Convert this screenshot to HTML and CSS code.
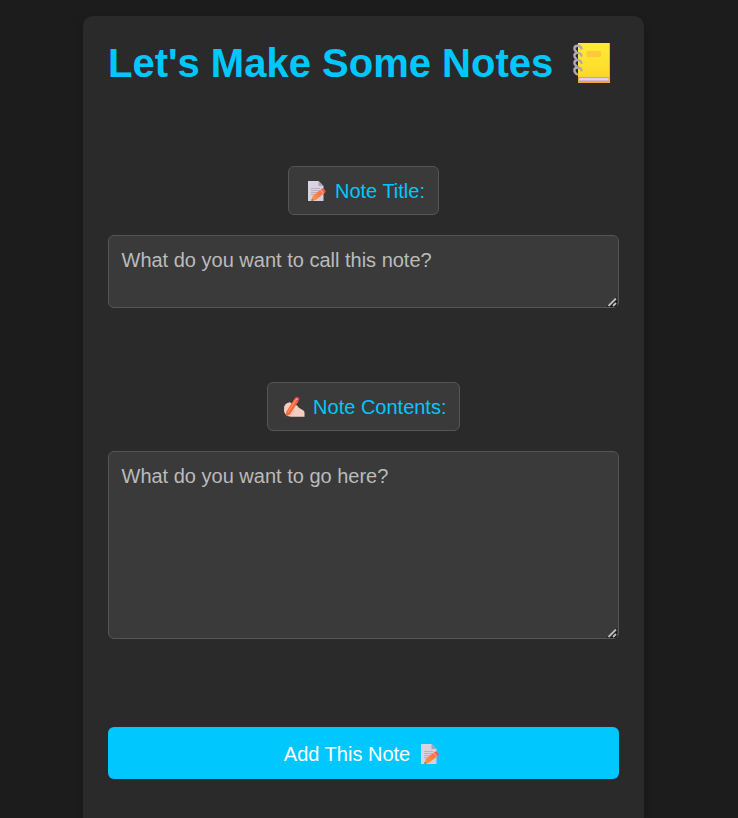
FILE: index.html
```html
<!DOCTYPE html>
<html lang="en">
<head>
<meta charset="utf-8">
<title>Notes</title>
<link rel="stylesheet" href="styles.css">
</head>
<body>
<svg class="defs" width="0" height="0" aria-hidden="true">
  <defs>
    <linearGradient id="paper" x1="0" y1="0" x2="1" y2="1"><stop offset="0" stop-color="#dcd5de"/><stop offset="1" stop-color="#d5cbe2"/></linearGradient>
    <linearGradient id="pencil" x1="1" y1="0" x2="0" y2="1"><stop offset="0" stop-color="#ff6546"/><stop offset="1" stop-color="#ff9b3c"/></linearGradient>
    <linearGradient id="cover" x1="0" y1="0" x2="0" y2="1"><stop offset="0" stop-color="#ffeb35"/><stop offset="1" stop-color="#fdd526"/></linearGradient>
    <linearGradient id="skin" x1="0" y1="0" x2="1" y2="1"><stop offset="0" stop-color="#f5cbb9"/><stop offset="1" stop-color="#f2d0c4"/></linearGradient>
    <symbol id="memo" viewBox="0 0 20 20">
      <path d="M1 0h10.500l5 5v15H1z" fill="url(#paper)"/>
      <path d="M11.500 0v5h5z" fill="#aba2b2"/>
      <path d="M4 7.500h9M4 9.500h8M4 11.500h6M4 13.500h4" stroke="#b0a8b8" stroke-width=".8"/>
      <path d="M4.500 19.700l1.200-4.700 7.700-6.200 3.200 4-7.900 6.200z" fill="url(#pencil)"/>
      <path d="M4.200 19.800l.7-2 1.600 1.700z" fill="#74596d"/>
      <path d="M13 9.100l1-.8 3.200 4-1 .8z" fill="#f0a09a"/>
      <path d="M14 8.300l1-.8q1.200-.5 2.800 1.300 1.500 1.700.4 2.700l-1 .8z" fill="#fb5848"/>
    </symbol>
    <symbol id="grip" viewBox="0 0 11 11">
      <path d="M0 9.500L9 0l1 1v8l-2 1H0z" fill="#161616"/>
      <path d="M1.500 9L9 1.500" stroke="#bebebe" stroke-width="2"/>
      <path d="M6 9l3-3" stroke="#bebebe" stroke-width="2"/>
    </symbol>
  </defs>
</svg>
<main class="card">
  <h1 class="title">Let's Make Some Notes
    <svg class="notebook" viewBox="0 0 40 40" aria-hidden="true">
      <path d="M6 0h32v40H6z" fill="url(#cover)"/>
      <path d="M6 34h32v6H6z" fill="#eea733"/>
      <path d="M7 35h29.500v2H7z" fill="#e6cdf0"/><path d="M7 37h29.500v1H7z" fill="#d9afd8"/>
      <path d="M37 0h1v40h-1z" fill="#dfbd2b"/>
      <rect x="14.500" y="8" width="14.500" height="6" rx="1" fill="#ffc83b"/>
      <g fill="none" stroke="#b4a6b9" stroke-width="2.400" stroke-linecap="round">
        <path d="M9.500 5.500C8.500 1.500 2.400 2 2.400 5.500c0 1.500.6 2.300 1.800 3"/>
        <path d="M9.500 12.700C8.500 8.700 2.400 9.200 2.400 12.700c0 1.500.6 2.300 1.800 3"/>
        <path d="M9.500 19.900C8.500 15.900 2.400 16.400 2.400 19.900c0 1.500.6 2.300 1.800 3"/>
        <path d="M9.500 27.300C8.500 23.300 2.400 23.800 2.400 27.300c0 1.700.8 3 2.500 4"/>
      </g>
    </svg>
  </h1>
  <label class="label label-title" for="note-title"><svg class="icon" aria-hidden="true"><use href="#memo"/></svg>Note Title:</label>
  <div class="entry entry-title">
    <textarea class="field" id="note-title" placeholder="What do you want to call this note?"></textarea>
    <svg class="grip" aria-hidden="true"><use href="#grip"/></svg>
  </div>
  <label class="label label-contents" for="note-contents"><svg class="icon icon-hand" viewBox="0 0 22 20" aria-hidden="true">
      <path d="M1 13C1 9 3.500 6 7 5.500L12 8c2 .2 3 1 3.500 2.500l4.500 2.800c1 .8 1.500 1.500 1.500 2.500v4H8.500C4 19.500 1 17 1 13z" fill="url(#skin)"/>
      <path d="M7 18C9 17 10.500 15.500 11 13.500" fill="none" stroke="#dbb0a5" stroke-width=".8"/>
      <path d="M3.200 19.600l0-4.600L11.500 1.800l4 2.500L7 17.300z" fill="#f4643b"/>
      <path d="M4.700 15.800L12.600 3.300" stroke="#ff9158" stroke-width="1.200"/>
      <path d="M11.500 1.800L12.800 0q2.800-.4 3.700 1.500l-1 2.800z" fill="#ed4548"/>
      <path d="M12.900 1.300l1.900 1-.8 1.300-1.800-1z" fill="#d8b6c4"/>
      <path d="M1 10.500c.6-3.200 3-5 6.500-5L6 8.200C4 8.500 3 9.700 2.500 11.800z" fill="#f6cdbb"/>
    </svg>Note Contents:</label>
  <div class="entry entry-contents">
    <textarea class="field" id="note-contents" placeholder="What do you want to go here?"></textarea>
    <svg class="grip" aria-hidden="true"><use href="#grip"/></svg>
  </div>
  <button class="add" type="button">Add This Note<svg class="icon" aria-hidden="true"><use href="#memo"/></svg></button>
</main>
</body>
</html>
```
FILE: styles.css
```css
* { box-sizing: border-box; }
html { background: #1c1c1c; }
body {
  height: 818px;
  margin: 0;
  padding: 16px 94px 0 83px;
  overflow: hidden;
  background: #1c1c1c;
  color: #fff;
  font-family: Arial, "Liberation Sans", sans-serif;
  font-size: 20px;
}
.defs { position: absolute; }
.card {
  display: flex;
  flex-direction: column;
  align-items: center;
  height: 802px;
  padding: 25px 25px 0;
  border-radius: 10px 10px 0 0;
  background: #2a2a2a;
  box-shadow: 0 4px 8px rgba(0, 0, 0, .2);
}
.title {
  display: flex;
  align-items: center;
  align-self: stretch;
  gap: 19px;
  height: 45px;
  margin: 0 0 80px;
  color: #00c8ff;
  font-size: 40px;
  line-height: 45px;
  white-space: nowrap;
}
.notebook { flex: none; width: 40px; height: 40px; margin-top: -1px; }
.label {
  display: flex;
  align-items: center;
  justify-content: flex-end;
  height: 49px;
  padding: 2px 13px 0;
  border: 1px solid #555;
  border-radius: 6px;
  background: #3a3a3a;
  color: #00c8ff;
}
.label-title { width: 151px; }
.label-contents { width: 193px; padding-right: 12.5px; }
.icon { flex: none; width: 20px; height: 20px; margin: -2px 8px 0 0; }
.icon-hand { width: 22px; }
.entry { position: relative; width: 100%; margin-top: 20px; }
.entry-title { height: 73px; margin-bottom: 74px; }
.entry-contents { height: 188px; margin-bottom: 88px; }
.field {
  display: block;
  width: 100%;
  height: 100%;
  padding: 13px 12px 12px 12.5px;
  border: 1px solid #555;
  border-radius: 6px;
  background: #3a3a3a;
  color: #fff;
  font: inherit;
  resize: none;
}
.field::placeholder { color: #bbb; }
.grip { position: absolute; right: 1px; bottom: 0; width: 11px; height: 11px; }
.add {
  display: flex;
  align-items: center;
  justify-content: center;
  width: 100%;
  height: 52px;
  padding: 2px 3px 0 0;
  border: 0;
  border-radius: 6px;
  background: #00c8ff;
  color: #fff;
  font: inherit;
}
.add .icon { margin: -1px 0 0 10px; }
```
